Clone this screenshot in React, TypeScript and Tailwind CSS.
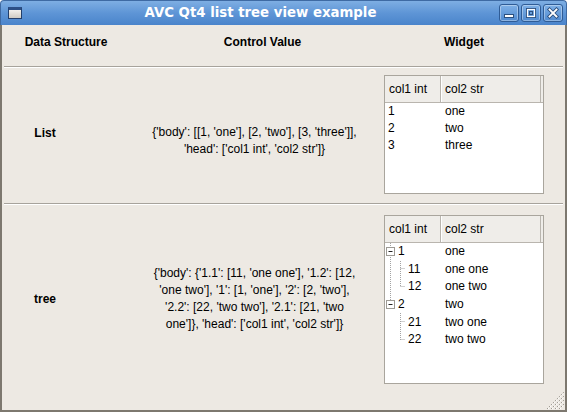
import React from 'react';

const ROW_H = 17.6;

function TitleButton({ kind }: { kind: 'min' | 'max' | 'close' }) {
  return (
    <div className="w-[20px] h-[18px] rounded-[3px] border border-[#2f5c96] bg-gradient-to-b from-[#7fb0e6] to-[#4f8ad0] shadow-[inset_0_0_0_1px_rgba(255,255,255,0.35)] flex items-center justify-center">
      <svg width="14" height="12" viewBox="0 0 14 12">
        {kind === 'min' && (
          <rect x="2.5" y="7.5" width="9" height="3" fill="#fff" stroke="#2b4f7e" strokeWidth="1" />
        )}
        {kind === 'max' && (
          <g>
            <rect x="2.5" y="1.5" width="9" height="9" fill="none" stroke="#2b4f7e" strokeWidth="1" />
            <rect x="3.5" y="2.5" width="7" height="7" fill="none" stroke="#fff" strokeWidth="1.2" />
            <rect x="5.5" y="4.5" width="3" height="3" fill="none" stroke="#2b4f7e" strokeWidth="1" />
          </g>
        )}
        {kind === 'close' && (
          <g strokeLinecap="square">
            <path d="M3.5 2.5 L10.5 9.5 M10.5 2.5 L3.5 9.5" stroke="#2b4f7e" strokeWidth="3.6" />
            <path d="M3.5 2.5 L10.5 9.5 M10.5 2.5 L3.5 9.5" stroke="#fff" strokeWidth="1.8" />
          </g>
        )}
      </svg>
    </div>
  );
}

function TitleBar() {
  return (
    <div className="h-[25px] flex items-center rounded-t-[4px] border border-b-0 border-[#3e6aa3] bg-gradient-to-b from-[#7eaee3] via-[#5e95d6] to-[#4a84cb]">
      <div className="ml-[7px] w-[14px] h-[12px] border border-[#233f6b] bg-gradient-to-b from-[#f2f0ec] to-[#cfcbc3] border-t-[3px] border-t-[#2c4f86]" />
      <div className="flex-1 text-center text-white font-['DejaVu_Sans',sans-serif] font-bold text-[13.3px] leading-none">
        AVC Qt4 list tree view example
      </div>
      <div className="flex gap-[2px] mr-[3px]">
        <TitleButton kind="min" />
        <TitleButton kind="max" />
        <TitleButton kind="close" />
      </div>
    </div>
  );
}

function Separator() {
  return (
    <div className="mx-[2px]">
      <div className="h-px bg-[#a7a39c]" />
      <div className="h-px bg-white" />
    </div>
  );
}

function ViewHeader() {
  return (
    <div className="h-[27px] flex bg-[#efede9] border-b border-[#b9b5ae]">
      <div className="w-[56px] pl-[4px] flex items-center border-r border-[#b9b5ae] shadow-[1px_0_0_#fff]">col1 int</div>
      <div className="w-[100px] pl-[4px] flex items-center border-r border-[#b9b5ae]">col2 str</div>
    </div>
  );
}

function ListWidget() {
  const rows = [
    ['1', 'one'],
    ['2', 'two'],
    ['3', 'three'],
  ];
  return (
    <div className="w-[160px] h-[119px] border border-[#a9a59d] bg-white flex flex-col">
      <ViewHeader />
      <div className="flex flex-col">
        {rows.map(([a, b]) => (
          <div key={a} className="h-[17px] flex items-center">
            <div className="w-[57px] pl-[3px]">{a}</div>
            <div className="pl-[3px]">{b}</div>
          </div>
        ))}
      </div>
    </div>
  );
}

function TreeBranches() {
  const c = (i: number) => ROW_H / 2 + ROW_H * i;
  const dot = { stroke: '#a3a3a3', strokeWidth: 1, strokeDasharray: '1 1' };
  const box = (cy: number) => (
    <g>
      <rect x="1.5" y={Math.round(cy) - 4.5} width="8" height="8" fill="#fff" stroke="#9d9a94" />
      <path d={`M3.5 ${Math.round(cy) - 0.5} H7.5`} stroke="#222" strokeWidth="1" />
    </g>
  );
  return (
    <svg className="absolute left-0 top-0" width="30" height="110" viewBox="0 0 30 110">
      <path d={`M5.5 0 V${Math.round(c(3))}`} {...dot} />
      <path d={`M15.5 ${Math.round(ROW_H)} V${Math.round(c(2))}`} {...dot} />
      <path d={`M15.5 ${Math.round(c(1)) - 0.5} H20 M15.5 ${Math.round(c(2)) - 0.5} H20`} {...dot} />
      <path d={`M15.5 ${Math.round(ROW_H * 4)} V${Math.round(c(5))}`} {...dot} />
      <path d={`M15.5 ${Math.round(c(4)) - 0.5} H20 M15.5 ${Math.round(c(5)) - 0.5} H20`} {...dot} />
      {box(c(0))}
      {box(c(3))}
    </svg>
  );
}

function TreeWidget() {
  const rows: [string, string, number][] = [
    ['1', 'one', 0],
    ['11', 'one one', 1],
    ['12', 'one two', 1],
    ['2', 'two', 0],
    ['21', 'two one', 1],
    ['22', 'two two', 1],
  ];
  return (
    <div className="w-[160px] h-[169px] border border-[#a9a59d] bg-white flex flex-col">
      <ViewHeader />
      <div className="relative flex flex-col">
        <TreeBranches />
        {rows.map(([a, b, depth]) => (
          <div key={a} className="h-[17.6px] flex items-center">
            <div className={`w-[57px] ${depth ? 'pl-[23px]' : 'pl-[13px]'}`}>{a}</div>
            <div className="pl-[3px]">{b}</div>
          </div>
        ))}
      </div>
    </div>
  );
}

function ResizeGrip() {
  const lines = [0, 4, 8, 12];
  return (
    <svg className="absolute right-[1px] bottom-[1px]" width="18" height="18" viewBox="0 0 18 18">
      {lines.map((o) => (
        <g key={o}>
          <path d={`M${o + 1} 18 L18 ${o + 1}`} stroke="#9e9a92" strokeWidth="1" strokeDasharray="1.4 1.4" />
          <path d={`M${o + 2} 18 L18 ${o + 2}`} stroke="#ffffff" strokeWidth="1" strokeDasharray="1.4 1.4" />
        </g>
      ))}
    </svg>
  );
}

export default function App() {
  return (
    <div className="w-[567px] h-[412px] flex flex-col font-['Liberation_Sans',Arial,sans-serif] text-[12px] leading-[15px] text-black">
      <TitleBar />
      <div className="relative flex-1 flex flex-col bg-[#ede9e3] border-x-2 border-b-2 border-[#7d786f]">
        <div className="h-[41px] grid grid-cols-[114px_249px_160px] gap-x-[6px] pl-[7px] pt-[10px] font-bold">
          <div className="text-center">Data Structure</div>
          <div className="text-center pl-[18px]">Control Value</div>
          <div className="text-center">Widget</div>
        </div>
        <Separator />
        <div className="h-[135px] grid grid-cols-[114px_249px_160px] gap-x-[6px] pl-[7px] pt-[7px] items-start">
          <div className="h-[119px] flex items-center justify-center font-bold pb-[3px] pr-[42px]">List</div>
          <div className="h-[119px] flex items-center justify-center pl-[2px] pt-[13px] text-center leading-[17px]">
            <div>
              {"{'body': [[1, 'one'], [2, 'two'], [3, 'three']],"}
              <br />
              {"'head': ['col1 int', 'col2 str']}"}
            </div>
          </div>
          <ListWidget />
        </div>
        <Separator />
        <div className="flex-1 grid grid-cols-[114px_249px_160px] gap-x-[6px] pl-[7px] pt-[10px] items-start">
          <div className="h-[169px] flex items-center justify-center font-bold pr-[42px]">tree</div>
          <div className="h-[169px] flex items-center justify-center pl-[2px] pb-[2px] text-center leading-[17px]">
            <div>
              {"{'body': {'1.1': [11, 'one one'], '1.2': [12,"}
              <br />
              {"'one two'], '1': [1, 'one'], '2': [2, 'two'],"}
              <br />
              {"'2.2': [22, 'two two'], '2.1': [21, 'two"}
              <br />
              {"one']}, 'head': ['col1 int', 'col2 str']}"}
            </div>
          </div>
          <TreeWidget />
        </div>
        <ResizeGrip />
      </div>
    </div>
  );
}
